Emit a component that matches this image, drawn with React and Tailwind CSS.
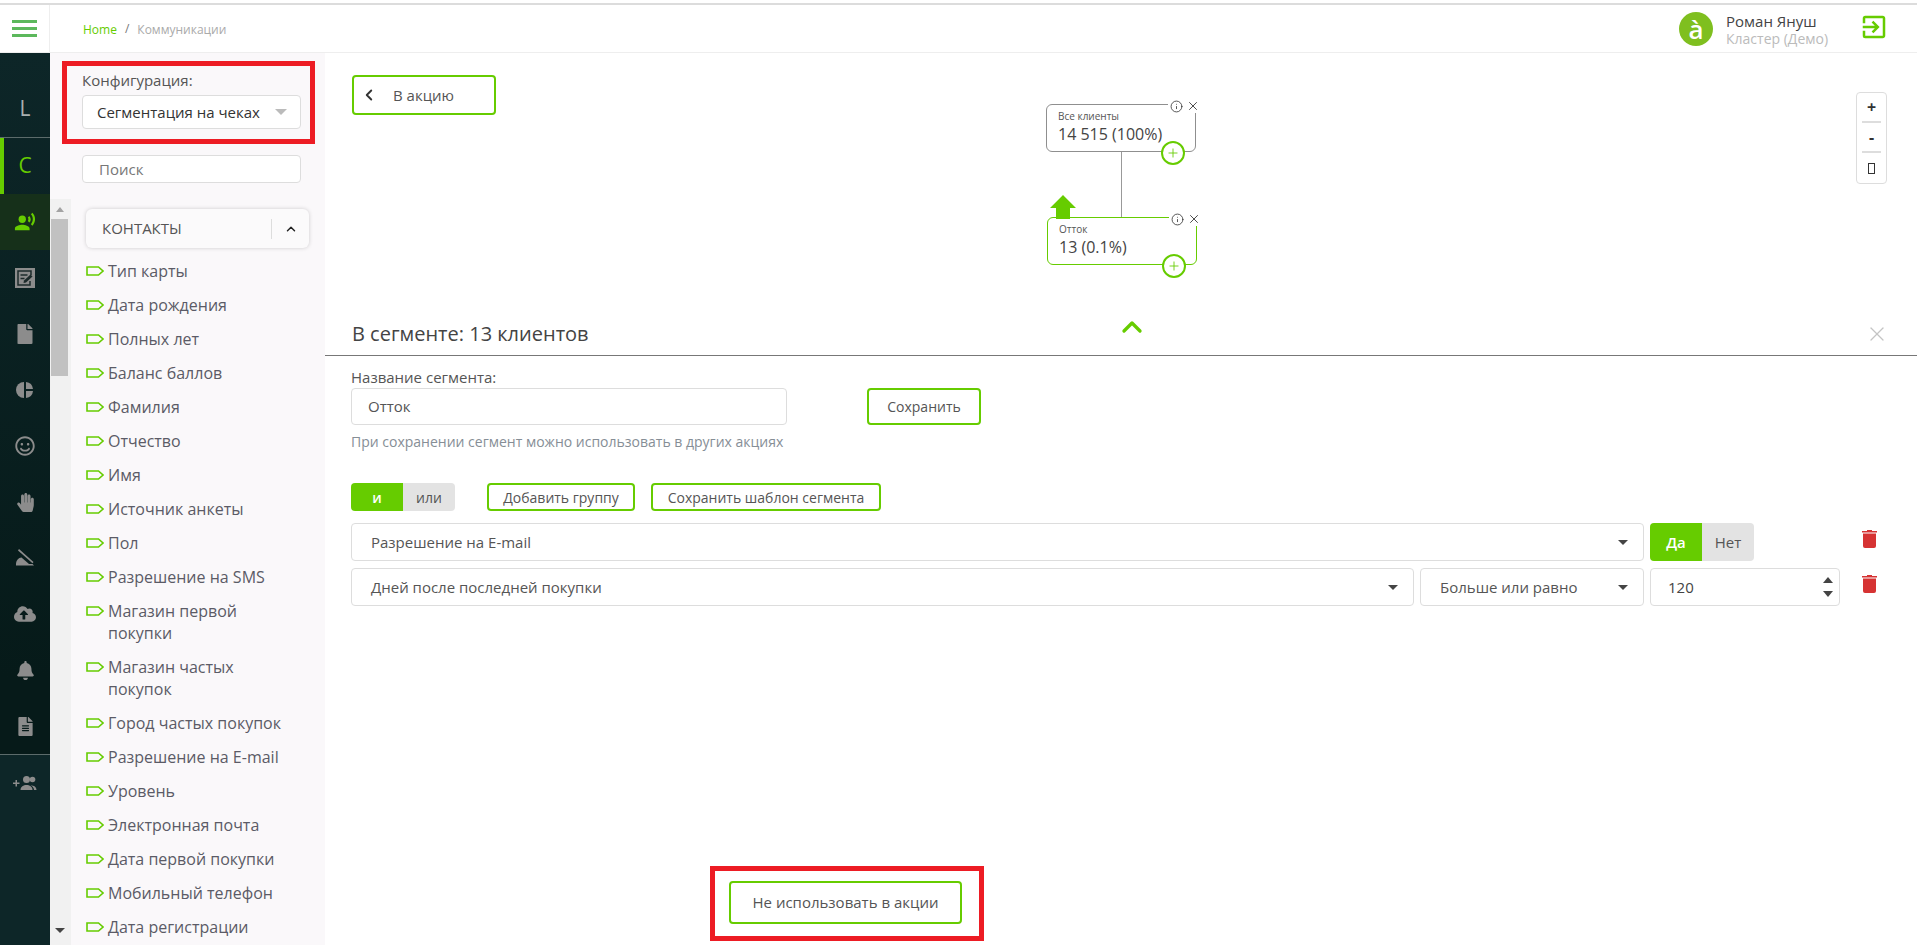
import React from 'react';
import { ChevronLeft, ChevronUp, X, Plus, Info } from 'lucide-react';
import { FaFile, FaRegSmile, FaHandPaper, FaCloudUploadAlt, FaBell, FaFileAlt } from 'react-icons/fa';
import { MdRecordVoiceOver, MdExitToApp } from 'react-icons/md';

const fields = [
    'Тип карты', 'Дата рождения', 'Полных лет', 'Баланс баллов', 'Фамилия', 'Отчество', 'Имя',
    'Источник анкеты', 'Пол', 'Разрешение на SMS', 'Магазин первой покупки', 'Магазин частых покупок',
    'Город частых покупок', 'Разрешение на E-mail', 'Уровень', 'Электронная почта',
    'Дата первой покупки', 'Мобильный телефон', 'Дата регистрации',
];

const Caret = ({ className = '' }) => (
    <span className={`w-0 h-0 border-x-[5px] border-x-transparent border-t-[5px] border-t-[#444] ${className}`} />
);

const Tag = () => (
    <svg width="18" height="10" viewBox="0 0 18 10" className="shrink-0 mt-[6px]">
        <path d="M1 1h11.5L17 5l-4.500 4H1z" fill="none" stroke="#66cc00" strokeWidth="1.600" />
    </svg>
);

const NoteIcon = () => (
    <svg width="20" height="20" viewBox="0 0 20 20">
        <rect width="20" height="20" fill="#8c8c8c" />
        <path d="M16 7V3H3v14h12v-4" fill="none" stroke="#1d2b2b" strokeWidth="1.500" />
        <path d="M5.500 7h7M5.500 10.500h4" fill="none" stroke="#1d2b2b" strokeWidth="1.500" />
        <path d="M8.500 15l.5-2.500 6.500-6 2 2-6.500 6z" fill="#1d2b2b" />
    </svg>
);

const PieIcon = () => (
    <svg width="18" height="18" viewBox="0 0 18 18" fill="#8c8c8c">
        <path d="M8 1A8 8 0 0 0 8 17Z" />
        <path d="M10 1A8 8 0 0 1 17 8H10Z" />
        <path d="M10 10H17A8 8 0 0 1 10 17Z" />
    </svg>
);

const SignIcon = () => (
    <svg width="20" height="20" viewBox="0 0 20 20" fill="#8c8c8c">
        <path d="M4 1l14.500 13-1 1.200L3 2.500z" />
        <path d="M1 16c0-3.500 2.500-6.500 5.500-6.500L14 16z" />
        <path d="M1 16h16.500l1.500 1.500H1z" />
    </svg>
);

const AddUsersIcon = () => (
    <svg width="24" height="16" viewBox="0 0 24 16" fill="#8c8c8c">
        <path d="M2.500 5h1.500v2.500h2.500V9H4v2.500H2.500V9H0V7.500h2.500z" />
        <circle cx="13.500" cy="4.500" r="3.500" />
        <path d="M7.500 15c0-3.500 3-5 6-5s6 1.500 6 5z" />
        <circle cx="19.500" cy="4.500" r="2.800" />
        <path d="M17.500 10.200c3.500.2 6 1.800 6 4.800H21c0-2-1-3.500-3.500-4.800z" />
    </svg>
);

const TrashIcon = () => (
    <svg width="15" height="18" viewBox="0 0 15 18" fill="#d63333">
        <path d="M5 0h5v1h5v1.500H0V1h5z" />
        <path d="M1 3.500h13V16a2 2 0 0 1-2 2H3a2 2 0 0 1-2-2z" />
    </svg>
);

const RailIcon = ({ children, active }) => (
    <div className={`h-14 flex items-center justify-center ${active ? 'bg-[#16301a] text-[#66cc00]' : 'text-[#8c8c8c]'}`}>
        {children}
    </div>
);

const Rail = () => (
    <div className="w-[50px] shrink-0 flex flex-col bg-[linear-gradient(180deg,#0d2628_0%,#061a19_70%)]">
        <div className="h-[85px] flex items-center justify-center border-b border-[#5c6b6b] text-[#a9b0b0] text-[21px] pt-[27px]">L</div>
        <div className="h-14 flex items-center justify-center border-l-4 border-[#66cc00] pr-1 text-[#66cc00] text-[21px]">C</div>
        <RailIcon active><MdRecordVoiceOver size={22} /></RailIcon>
        <RailIcon><NoteIcon /></RailIcon>
        <RailIcon><FaFile size={20} /></RailIcon>
        <RailIcon><PieIcon /></RailIcon>
        <RailIcon><FaRegSmile size={20} /></RailIcon>
        <RailIcon><FaHandPaper size={19} /></RailIcon>
        <RailIcon><SignIcon /></RailIcon>
        <RailIcon><FaCloudUploadAlt size={22} /></RailIcon>
        <RailIcon><FaBell size={19} /></RailIcon>
        <RailIcon><FaFileAlt size={19} /></RailIcon>
        <div className="flex-1 border-t border-[#5c6b6b] bg-[#0d2628] pt-[20px] flex justify-center items-start">
            <AddUsersIcon />
        </div>
    </div>
);

const Sidebar = () => (
    <div className="w-[275px] shrink-0 h-full bg-[#faf8fa] flex flex-col overflow-hidden">
        <div className="relative px-8 pt-[17px] shrink-0">
            <div className="absolute left-3 top-2 w-[253px] h-[83px] border-[5px] border-[#ed1c24]" />
            <div className="text-[15px] leading-5 text-[#555]">Конфигурация:</div>
            <div className="mt-[5px] h-[34px] w-[219px] bg-white border border-[#ddd] rounded flex items-center justify-between pl-[14px] pr-[13px] text-[15px] text-[#333] whitespace-nowrap">
                Сегментация на чеках
                <span className="w-0 h-0 border-x-[6px] border-x-transparent border-t-[6px] border-t-[#bbb]" />
            </div>
            <div className="mt-[26px] h-7 w-[219px] bg-white border border-[#ddd] rounded flex items-center pl-4 text-[15px] text-[#777]">Поиск</div>
        </div>
        <div className="flex flex-1 min-h-0 mt-4">
            <div className="w-[21px] shrink-0 bg-[#f1f1f1] flex flex-col items-center pt-[8px] pb-3 pr-[2px]">
                <span className="w-0 h-0 border-x-[4px] border-x-transparent border-b-[5px] border-b-[#a3a3a3]" />
                <div className="w-[17px] h-[157px] bg-[#c1c1c1] mt-[7px]" />
                <Caret className="mt-auto" />
            </div>
            <div className="flex-1 pl-[15px] pr-4 pt-[10px] min-w-0">
                <div className="h-[39px] bg-[#fbfafb] rounded-md shadow-[0_0_4px_rgba(0,0,0,0.18)] flex items-center pl-4 pr-0 text-[15px] text-[#555]">
                    <span className="flex-1">КОНТАКТЫ</span>
                    <span className="w-[38px] h-5 border-l border-[#ddd] flex items-center justify-center text-[#222]">
                        <ChevronUp size={14} strokeWidth={2.500} />
                    </span>
                </div>
                <ul className="mt-[6px]">
                    {fields.map((f) => (
                        <li key={f} className="flex gap-1 py-[6px] text-[16px] leading-[22px] text-[#5b5b66]">
                            <Tag />
                            <span className="w-[180px]">{f}</span>
                        </li>
                    ))}
                </ul>
            </div>
        </div>
    </div>
);

const Node = ({ label, value, green, className = '' }) => (
    <div className={`absolute w-[150px] h-12 rounded-md border bg-white pl-[11px] pt-[4px] ${green ? 'border-[#66cc00]' : 'border-[#8f8f8f]'} ${className}`}>
        <div className="text-[10px] leading-[14px] text-[#555]">{label}</div>
        <div className="text-[16px] leading-[22px] text-[#444]">{value}</div>
        <div className="absolute -right-[5px] -top-[6px] flex items-center bg-white pl-[2px] text-[#333]">
            <Info size={13} strokeWidth={1.500} />
            <X size={14} strokeWidth={1.500} className="ml-[3px]" />
        </div>
        <div className="absolute right-[10px] -bottom-[14px] w-[24px] h-[24px] rounded-full border-2 border-[#66cc00] bg-white flex items-center justify-center text-[#66cc00]">
            <Plus size={14} strokeWidth={1.500} />
        </div>
    </div>
);

const Graph = () => (
    <div className="relative h-[302px] shrink-0">
        <button className="absolute left-[27px] top-[22px] w-[144px] h-10 border-2 border-[#66cc00] rounded text-[15px] text-[#555] flex items-center pl-[6px] gap-[15px]">
            <ChevronLeft size={18} strokeWidth={2.500} className="text-[#333]" />
            В акцию
        </button>
        <Node label="Все клиенты" value="14 515 (100%)" className="left-[721px] top-[51px]" />
        <div className="absolute left-[796px] top-[99px] w-px h-[66px] bg-[#999]" />
        <Node label="Отток" value="13 (0.1%)" green className="left-[722px] top-[164px]" />
        <svg width="26" height="24" viewBox="0 0 26 24" className="absolute left-[725px] top-[142px]">
            <path d="M13 0l13 13h-6v11H6V13H0z" fill="#66cc00" />
        </svg>
        <div className="absolute left-[1531px] top-[39px] w-[31px] h-[92px] border border-[#ddd] rounded px-[5px] flex flex-col items-center text-[#333] font-bold">
            <div className="h-[30px] w-full border-b-2 border-[#ddd] flex items-center justify-center text-[16px]">+</div>
            <div className="h-[30px] w-full border-b-2 border-[#ddd] flex items-center justify-center text-[16px]">-</div>
            <div className="flex-1 flex items-center justify-center">
                <span className="w-[7px] h-[11px] border border-[#333]" />
            </div>
        </div>
        <div className="absolute left-[27px] right-[28px] bottom-[6px] h-[30px] flex items-center justify-between">
            <span className="text-[20px] text-[#444]">В сегменте: 13 клиентов</span>
            <X size={24} strokeWidth={1.250} className="text-[#c4c4c4]" />
        </div>
        <ChevronUp size={32} strokeWidth={2.500} className="absolute left-[791px] bottom-[12px] text-[#66cc00]" />
    </div>
);

const Outline = ({ className = '', children }) => (
    <button className={`border-2 border-[#66cc00] rounded text-[#555] flex items-center justify-center ${className}`}>{children}</button>
);

const Field = ({ className = '', children, caret }) => (
    <div className={`h-[38px] shrink-0 bg-white border border-[#ddd] rounded flex items-center justify-between pl-[19px] pr-[15px] text-[15px] text-[#555] ${className}`}>
        <span>{children}</span>
        {caret && <Caret />}
    </div>
);

export default function App() {
    return (
        <div className="h-[945px] overflow-hidden bg-white flex flex-col font-['Open_Sans',sans-serif] pt-[3px]">
            <div className="h-[2px] shrink-0 bg-[#dcdcdc]" />
            <div className="h-[48px] shrink-0 flex items-center border-b border-[#eee]">
                <div className="w-[50px] h-full flex items-center justify-center border-r border-[#eee]">
                    <div className="w-[25px] flex flex-col gap-1">
                        <span className="h-[3px] bg-[#5cb85c]" />
                        <span className="h-[3px] bg-[#5cb85c]" />
                        <span className="h-[3px] bg-[#5cb85c]" />
                    </div>
                </div>
                <div className="pl-[33px] pt-[2px] text-[12px] text-[#aaa] flex items-center gap-2">
                    <span className="text-[#66cc00]">Home</span>
                    <span className="text-[#777] -mt-[2px]">/</span>
                    <span>Коммуникации</span>
                </div>
                <div className="ml-auto flex items-center pr-[28px]">
                    <div className="w-[34px] h-[34px] rounded-full bg-[#7fbf1f] text-white font-semibold flex items-center justify-center text-[26px] leading-none">à</div>
                    <div className="ml-[13px] w-[133px] mt-[3px] leading-[17px]">
                        <div className="text-[15px] text-[#444]">Роман Януш</div>
                        <div className="text-[14px] text-[#bbb]">Кластер (Демо)</div>
                    </div>
                    <MdExitToApp size={30} className="text-[#66cc00] -mt-[3px]" />
                </div>
            </div>
            <div className="flex-1 min-h-0 flex">
                <Rail />
                <Sidebar />
                <div className="flex-1 min-w-0 flex flex-col">
                    <Graph />
                    <div className="border-t border-[#777] flex-1 pl-[26px] flex flex-col">
                        <div className="mt-[11px] mb-px text-[15px] leading-5 text-[#555]">Название сегмента:</div>
                        <div className="flex">
                            <div className="w-[436px] h-[37px] border border-[#ddd] rounded flex items-center pl-4 text-[15px] text-[#555]">Отток</div>
                            <Outline className="ml-[80px] w-[114px] h-[37px] text-[14px]">Сохранить</Outline>
                        </div>
                        <div className="mt-[8px] text-[14px] leading-[18px] text-[#868e96]">При сохранении сегмент можно использовать в других акциях</div>
                        <div className="mt-[32px] flex items-center h-7">
                            <div className="flex w-[104px] h-7 rounded overflow-hidden text-[14px]">
                                <span className="flex-1 bg-[#66cc00] text-white font-semibold flex items-center justify-center">и</span>
                                <span className="flex-1 bg-[#e3e3e3] text-[#555] flex items-center justify-center">или</span>
                            </div>
                            <Outline className="ml-8 w-[148px] h-7 text-[14px]">Добавить группу</Outline>
                            <Outline className="ml-4 w-[230px] h-7 text-[14px]">Сохранить шаблон сегмента</Outline>
                        </div>
                        <div className="mt-3 flex gap-[6px]">
                            <Field caret className="w-[1293px]">Разрешение на E-mail</Field>
                            <div className="flex w-[104px] h-[38px] rounded overflow-hidden text-[15px]">
                                <span className="flex-1 bg-[#66cc00] text-white font-semibold flex items-center justify-center">Да</span>
                                <span className="flex-1 bg-[#e3e3e3] text-[#555] flex items-center justify-center">Нет</span>
                            </div>
                            <div className="ml-[102px] mt-[7px]"><TrashIcon /></div>
                        </div>
                        <div className="mt-[7px] flex gap-[6px]">
                            <Field caret className="w-[1063px]">Дней после последней покупки</Field>
                            <Field caret className="w-[224px]">Больше или равно</Field>
                            <div className="w-[190px] h-[38px] shrink-0 border border-[#ddd] rounded flex items-center justify-between pl-[17px] pr-[6px] text-[15px] text-[#444]">
                                120
                                <span className="flex flex-col gap-2">
                                    <span className="w-0 h-0 border-x-[5px] border-x-transparent border-b-[6px] border-b-[#444]" />
                                    <span className="w-0 h-0 border-x-[5px] border-x-transparent border-t-[6px] border-t-[#444]" />
                                </span>
                            </div>
                            <div className="ml-[16px] mt-[7px]"><TrashIcon /></div>
                        </div>
                        <div className="relative mt-[275px] ml-[378px] w-[233px]">
                            <div className="absolute -left-[19px] -top-[15px] w-[274px] h-[75px] border-[5px] border-[#ed1c24]" />
                            <Outline className="relative w-[233px] h-[43px] text-[15px]">Не использовать в акции</Outline>
                        </div>
                    </div>
                </div>
            </div>
        </div>
    );
}
